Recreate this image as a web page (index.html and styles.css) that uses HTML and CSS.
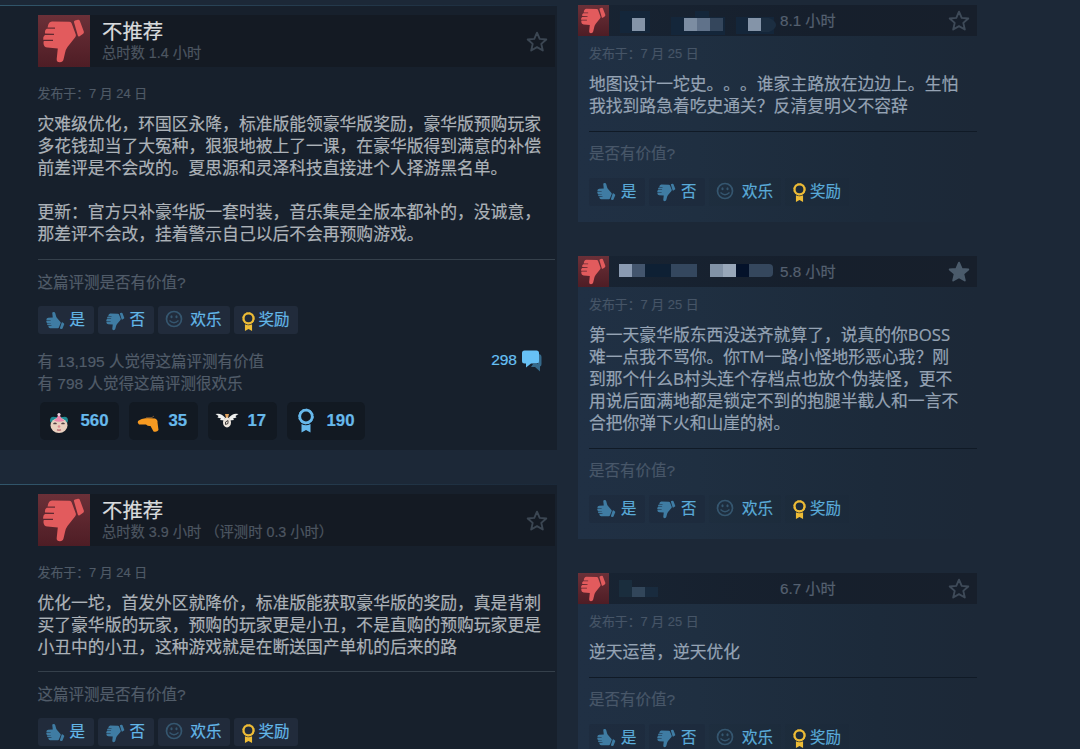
FILE: index.html
```
<!DOCTYPE html>
<html lang="zh-CN">
<head>
<meta charset="utf-8">
<title>评测</title>
<link rel="stylesheet" href="styles.css">
</head>
<body>
<svg class="defs" width="0" height="0" aria-hidden="true">
  <defs>
    <symbol id="thumb" viewBox="0 0 52 52">
      <path d="M36 7.2Q35.6 5.8 37 5.4L40 4.8Q41.3 4.6 41.8 5.8L45.8 16.5Q46.2 17.8 45.2 18.7L41.6 21.3Q40.3 22 39.8 20.5Z"/>
      <path d="M14 6.4L31.500 6.800Q33.200 6.900 33.700 8.400L37.800 19.500Q38.200 21 37.200 22.300L29.500 32Q27.500 34.700 27 38L25.500 44.500Q24.800 47.300 21.800 47.300Q18.400 47.200 18.700 44L19.800 33.500L9.500 32.600Q5.800 32 5.600 29Q5.300 27.500 5.800 26L15 26V24.800H5.200Q4.700 21.500 6.900 20L16 20V18.800L7 18.600Q6.500 15 8.800 13.800L17 13.800V12.600L9.600 12.400Q10.300 6.600 14 6.400Z"/>
    </symbol>
    <symbol id="star" viewBox="0 0 22 22">
      <path d="M11 1.700L13.700 7.900L20.300 8.500L15.300 12.900L16.800 19.500L11 16.100L5.200 19.500L6.700 12.900L1.700 8.500L8.300 7.900Z" stroke-width="1.900" stroke-linejoin="round"/>
    </symbol>
    <symbol id="smile" viewBox="0 0 18 18">
      <circle cx="9" cy="9" r="7.500" fill="none" stroke="currentColor" stroke-width="1.700"/>
      <ellipse cx="6.500" cy="6.800" rx="1.100" ry="1.500"/><ellipse cx="11.500" cy="6.800" rx="1.100" ry="1.500"/>
      <path d="M4.500 10.500Q9 15 13.500 10.500" fill="none" stroke="currentColor" stroke-width="1.400"/>
    </symbol>
    <symbol id="ribbon" viewBox="0 0 16 24">
      <circle cx="8" cy="8" r="6.300" fill="none" stroke="currentColor" stroke-width="2.800"/>
      <circle cx="8" cy="8" r="7.300" fill="none" stroke="currentColor" stroke-width="1" stroke-dasharray="2 1.800"/>
      <path d="M3.500 15.500Q8 18 12.500 15.500V24L8 21.400L3.500 24Z"/>
    </symbol>
  </defs>
</svg>
<main class="page">
  <section class="main-column">
    <article class="review">
      <header class="review-head">
        <span class="badge"><svg><use href="#thumb"/></svg></span>
        <div class="verdict"><h2>不推荐</h2><p>总时数 1.4 小时</p></div>
        <svg class="star"><use href="#star"/></svg>
      </header>
      <p class="date">发布于：7 月 24 日</p>
      <div class="text">灾难级优化，环国区永降，标准版能领豪华版奖励，豪华版预购玩家<br>多花钱却当了大冤种，狠狠地被上了一课，在豪华版得到满意的补偿<br>前差评是不会改的。夏思源和灵泽科技直接进个人择游黑名单。<br><br>更新：官方只补豪华版一套时装，音乐集是全版本都补的，没诚意，<br>那差评不会改，挂着警示自己以后不会再预购游戏。</div>
      <p class="question">这篇评测是否有价值?</p>
      <div class="actions">
        <span class="btn yes"><svg><use href="#thumb"/></svg>是</span>
        <span class="btn no"><svg><use href="#thumb"/></svg>否</span>
        <span class="btn funny"><svg><use href="#smile"/></svg>欢乐</span>
        <span class="btn award"><svg><use href="#ribbon"/></svg>奖励</span>
      </div>
      <div class="stats">
        <p>有 13,195 人觉得这篇评测有价值<br>有 798 人觉得这篇评测很欢乐</p>
        <span class="comments">298
          <svg viewBox="0 0 22 22"><path fill="#35698a" d="M17 4q3.500 0 3.500 3v7q0 2-1.500 2.500v5l-5-4.500h-4l2-3h5z"/><path fill="#67c1f5" d="M3.500 .5h12q2.500 0 2.500 2.500v8q0 2.500-2.500 2.500H10L5 17.500v-4H3.500Q1 13.500 1 11V3Q1 .5 3.500 .5z"/></svg>
        </span>
      </div>
      <div class="awards">
        <span class="chip clown">
          <svg viewBox="0 0 20 22"><path fill="#218c94" d="M1 9q0-5 5-4h8q5-1 5 4l-2 4H3z"/><ellipse cx="10" cy="13.500" rx="8.500" ry="7.500" fill="#e9d0bf"/><path fill="#ec86ad" d="M10 1.500Q12 7 15.500 8.500Q10 11 5 8.500Q8.500 6 10 1.500Z"/><circle cx="10" cy="2.500" r="1.600" fill="#f1d3df"/><path d="M4.500 12q1.500-1.500 3 0M12.500 12q1.500-1.500 3 0" fill="none" stroke="#544345" stroke-width="1.300"/><circle cx="10" cy="14.500" r="1.300" fill="#dd8b90"/><path d="M8 17.700q2 1 4 0" fill="none" stroke="#b35b66" stroke-width="1.200"/></svg>560</span>
        <span class="chip gun">
          <svg viewBox="0 0 22 22"><path fill="#f79a21" d="M1 9Q4 6.500 10 6L18 6.500Q21 8 20.500 10.500L21.500 18Q20 20.500 16.500 19.500L13.500 14Q11 14.500 9 12.500L2 12.500Q0 10.500 1 9Z"/><path d="M9 5.800l6-.3 2-1.500" stroke="#765431" fill="none"/></svg>35</span>
        <span class="chip wings">
          <svg viewBox="0 0 24 22"><path fill="#eff0ef" d="M.5 4Q6 2.500 10 7.500L9.500 10.500L5 10L6 8.500L2.500 7.500L3.500 6ZM23.500 4Q18 2.500 14 7.500L14.500 10.500L19 10L18 8.500L21.500 7.500L20.500 6Z"/><path fill="#e1a25d" d="M10 4h4l-1 4h-2z"/><ellipse cx="12" cy="12.500" rx="4" ry="5" fill="#ece5dc"/><path d="M10.500 12l2.500-1.500v3l-2.500 1z" fill="none" stroke="#44403f"/></svg>17</span>
        <span class="chip medal"><svg><use href="#ribbon"/></svg>190</span>
      </div>
    </article>
    <article class="review">
      <header class="review-head">
        <span class="badge"><svg><use href="#thumb"/></svg></span>
        <div class="verdict"><h2>不推荐</h2><p>总时数 3.9 小时 （评测时 0.3 小时）</p></div>
        <svg class="star"><use href="#star"/></svg>
      </header>
      <p class="date">发布于：7 月 24 日</p>
      <div class="text">优化一坨，首发外区就降价，标准版能获取豪华版的奖励，真是背刺<br>买了豪华版的玩家，预购的玩家更是小丑，不是直购的预购玩家更是<br>小丑中的小丑，这种游戏就是在断送国产单机的后来的路</div>
      <p class="question">这篇评测是否有价值?</p>
      <div class="actions">
        <span class="btn yes"><svg><use href="#thumb"/></svg>是</span>
        <span class="btn no"><svg><use href="#thumb"/></svg>否</span>
        <span class="btn funny"><svg><use href="#smile"/></svg>欢乐</span>
        <span class="btn award"><svg><use href="#ribbon"/></svg>奖励</span>
      </div>
    </article>
  </section>
  <section class="side-column">
    <article class="brief">
      <header class="brief-head">
        <span class="badge"><svg><use href="#thumb"/></svg></span>
        <svg class="name" viewBox="0 0 160 31"><path fill="#14263a" d="M1 6h30v22H1zM52 12h54v18H52zM76 6h14v8H76zM117 12h38v17h-38z"/><path fill="#8494a8" d="M13 13h13v13H13zM129 13h13v13h-13z"/><path fill="#7c8da2" d="M65 13h13v13H65z"/><path fill="#60728a" d="M78 13h13v13H78z"/><path fill="#34465c" d="M91 13h13v13H91z"/><path fill="#1c2e41" d="M142 13h8q7 3 7 7t-7 7h-8z"/></svg>
        <span class="hours">8.1 小时</span>
        <svg class="star"><use href="#star"/></svg>
      </header>
      <p class="date">发布于：7 月 25 日</p>
      <div class="text">地图设计一坨史。。。谁家主路放在边边上。生怕<br>我找到路急着吃史通关？反清复明义不容辞</div>
      <p class="question">是否有价值?</p>
      <div class="actions">
        <span class="btn yes"><svg><use href="#thumb"/></svg>是</span>
        <span class="btn no"><svg><use href="#thumb"/></svg>否</span>
        <span class="btn funny"><svg><use href="#smile"/></svg>欢乐</span>
        <span class="btn award"><svg><use href="#ribbon"/></svg>奖励</span>
      </div>
    </article>
    <article class="brief">
      <header class="brief-head">
        <span class="badge"><svg><use href="#thumb"/></svg></span>
        <svg class="name" viewBox="0 0 160 31"><path fill="#8b9bb2" d="M0 8h13v13H0z"/><path fill="#43556d" d="M13 8h13v13H13z"/><path fill="#0e2034" d="M26 8h26v13H26z"/><path fill="#34475e" d="M52 8h26v13H52z"/><path fill="#8192a6" d="M91 8h13v13H91z"/><path fill="#98a7b9" d="M104 8h13v13h-13z"/><path fill="#04122a" d="M117 8h13v13h-13z"/><path fill="#35475d" d="M130 8h20q4 0 4 4v5q0 4-4 4h-20z"/></svg>
        <span class="hours">5.8 小时</span>
        <svg class="star filled"><use href="#star"/></svg>
      </header>
      <p class="date">发布于：7 月 25 日</p>
      <div class="text">第一天豪华版东西没送齐就算了，说真的你BOSS<br>难一点我不骂你。你TM一路小怪地形恶心我？刚<br>到那个什么B村头连个存档点也放个伪装怪，更不<br>用说后面满地都是锁定不到的抱腿半截人和一言不<br>合把你弹下火和山崖的树。</div>
      <p class="question">是否有价值?</p>
      <div class="actions">
        <span class="btn yes"><svg><use href="#thumb"/></svg>是</span>
        <span class="btn no"><svg><use href="#thumb"/></svg>否</span>
        <span class="btn funny"><svg><use href="#smile"/></svg>欢乐</span>
        <span class="btn award"><svg><use href="#ribbon"/></svg>奖励</span>
      </div>
    </article>
    <article class="brief">
      <header class="brief-head">
        <span class="badge"><svg><use href="#thumb"/></svg></span>
        <svg class="name" viewBox="0 0 160 31"><path fill="#1a2d3d" d="M0 7h13v17H0z"/><path fill="#32465a" d="M13 14h13v10H13z"/><path fill="#192b3e" d="M26 14h13v10H26z"/></svg>
        <span class="hours">6.7 小时</span>
        <svg class="star"><use href="#star"/></svg>
      </header>
      <p class="date">发布于：7 月 25 日</p>
      <div class="text">逆天运营，逆天优化</div>
      <p class="question">是否有价值?</p>
      <div class="actions">
        <span class="btn yes"><svg><use href="#thumb"/></svg>是</span>
        <span class="btn no"><svg><use href="#thumb"/></svg>否</span>
        <span class="btn funny"><svg><use href="#smile"/></svg>欢乐</span>
        <span class="btn award"><svg><use href="#ribbon"/></svg>奖励</span>
      </div>
    </article>
  </section>
</main>
</body>
</html>
```
FILE: styles.css
```
* { box-sizing: border-box; margin: 0; padding: 0; }
body {
  height: 749px;
  overflow: hidden;
  background: #1c2837;
  color: #acb2b8;
  font-family: "Liberation Sans", "Noto Sans CJK SC", sans-serif;
  text-spacing-trim: space-all;
  -webkit-text-stroke: 0.2px;
}
.defs { display: block; }
svg { display: block; flex: none; fill: currentColor; }
.page { display: flex; align-items: flex-start; gap: 21px; height: 749px; overflow: hidden; padding-top: 5px; }

.main-column { width: 557px; display: flex; flex-direction: column; gap: 34px; }
.review {
  padding: 9px 2px 10px 37.5px;
  background: #17202c;
  border-top: 1px solid;
  border-image: linear-gradient(90deg, #31566b, #263d50 50%, #1b2939) 1;
}
.review-head { display: flex; height: 52px; background: #141a23; }
.badge { display: block; width: 52px; height: 52px; flex: none; background: linear-gradient(#6b3038, #4e1d25); color: #e25b5d; }
.badge svg { width: 100%; height: 100%; }
.verdict { flex: 1; padding: 4px 0 0 12.500px; white-space: nowrap; }
.verdict h2 { font-size: 20.400px; line-height: 26px; font-weight: 400; color: #d9dbdd; }
.verdict p { font-size: 14.300px; line-height: 17px; color: #4d5661; }
.star { width: 22px; height: 22px; margin: 16px 7px 0 0; fill: none; stroke: #3b4652; }
.date { padding-top: 18px; font-size: 12.900px; line-height: 18px; color: #4f5a67; }
.text { margin-top: 10px; font-family: "Open Sans", "Noto Sans CJK SC", sans-serif; font-size: 16.800px; line-height: 22px; white-space: nowrap; }
.question {
  margin-top: 14px;
  padding-top: 13px;
  border-top: 1px solid #35404b;
  font-size: 15.500px;
  line-height: 20px;
  color: #515c69;
}
.review + .review .question { margin-top: 13px; }
.actions { display: flex; gap: 4px; margin-top: 13px; }
.btn {
  display: flex;
  align-items: center;
  height: 28px;
  border-radius: 3px;
  background: #212b3b;
  color: #63b7e8;
  font-size: 15.500px;
  line-height: 26px;
  white-space: nowrap;
}
.btn svg { color: #3f7ca3; }
.yes, .no { width: 56px; padding-left: 6px; }
.yes svg, .no svg { width: 23px; height: 23px; margin-right: 3px; }
.yes svg { transform: scaleY(-0.9); }
.no svg { transform: translateY(1px) scaleY(0.92); }
.funny { width: 72px; padding-left: 7px; }
.funny svg { width: 18px; height: 18px; margin-right: 8px; color: #35566f; transform: translateY(-1px); }
.award { width: 64px; padding-left: 8px; }
.award svg { width: 13px; height: 19px; margin-right: 4px; color: #eebc36; transform: translateY(1px); }
.stats { display: flex; justify-content: space-between; margin-top: 17px; font-size: 15.500px; line-height: 22px; color: #515c69; }
.comments { display: flex; gap: 4px; padding-right: 12px; color: #67c1f5; line-height: 18px; }
.comments svg { width: 22px; height: 22px; transform: translateY(-1px); }
.awards { display: flex; gap: 10px; padding-left: 2px; margin-top: 7px; }
.chip {
  display: flex;
  align-items: center;
  height: 38px;
  border-radius: 5px;
  background: #121922;
  color: #67b9ec;
  font-size: 16.800px;
  font-weight: 700;
  line-height: 36px;
}
.clown { width: 79px; padding-left: 9px; }
.clown svg { width: 20px; height: 22px; margin-right: 12px; transform: translateY(2px); }
.gun { width: 69px; padding-left: 8px; }
.gun svg { width: 22px; height: 22px; margin-right: 10px; transform: translateY(2px); }
.wings { width: 69px; padding-left: 7px; }
.wings svg { width: 24px; height: 22px; margin-right: 9px; }
.medal { width: 78px; padding-left: 11px; }
.medal svg { width: 16px; height: 25px; margin-right: 13px; transform: translateY(-1px); }

.side-column { width: 399px; display: flex; flex-direction: column; gap: 34px; }
.brief { padding-bottom: 16.500px; background: linear-gradient(90deg, #203044, #1f2f41 30%, #1c2a3a 75%, #1c2837); color: #95a3b4; }
.brief-head { display: flex; height: 31px; background: linear-gradient(90deg, #182433, #161f2c 60%, #171f2b); }
.brief .badge { width: 31px; height: 31px; }
.name { width: 160px; height: 31px; margin-left: 10px; }
.hours { flex: 1; padding-left: 1px; font-size: 15.200px; line-height: 31px; color: #556070; }
.brief .star { margin-top: 5px; stroke: #3e4a58; }
.brief .star.filled { fill: #4b5b6b; stroke: #4b5b6b; }
.brief .date { padding: 9px 0 0 11px; line-height: 17px; color: #465567; }
.brief .text { margin: 11px 0 0 11px; }
.brief .question { margin: 14px 0 0 11px; padding-top: 12px; border-color: #101a26; color: #485769; }
.brief .actions { margin: 13.500px 0 0 11px; }
.brief .btn { background: rgba(28, 40, 57, 0.5); color: #5aabd9; }
.brief .funny, .brief .award { background: rgba(28, 40, 57, 0.15); }
```
